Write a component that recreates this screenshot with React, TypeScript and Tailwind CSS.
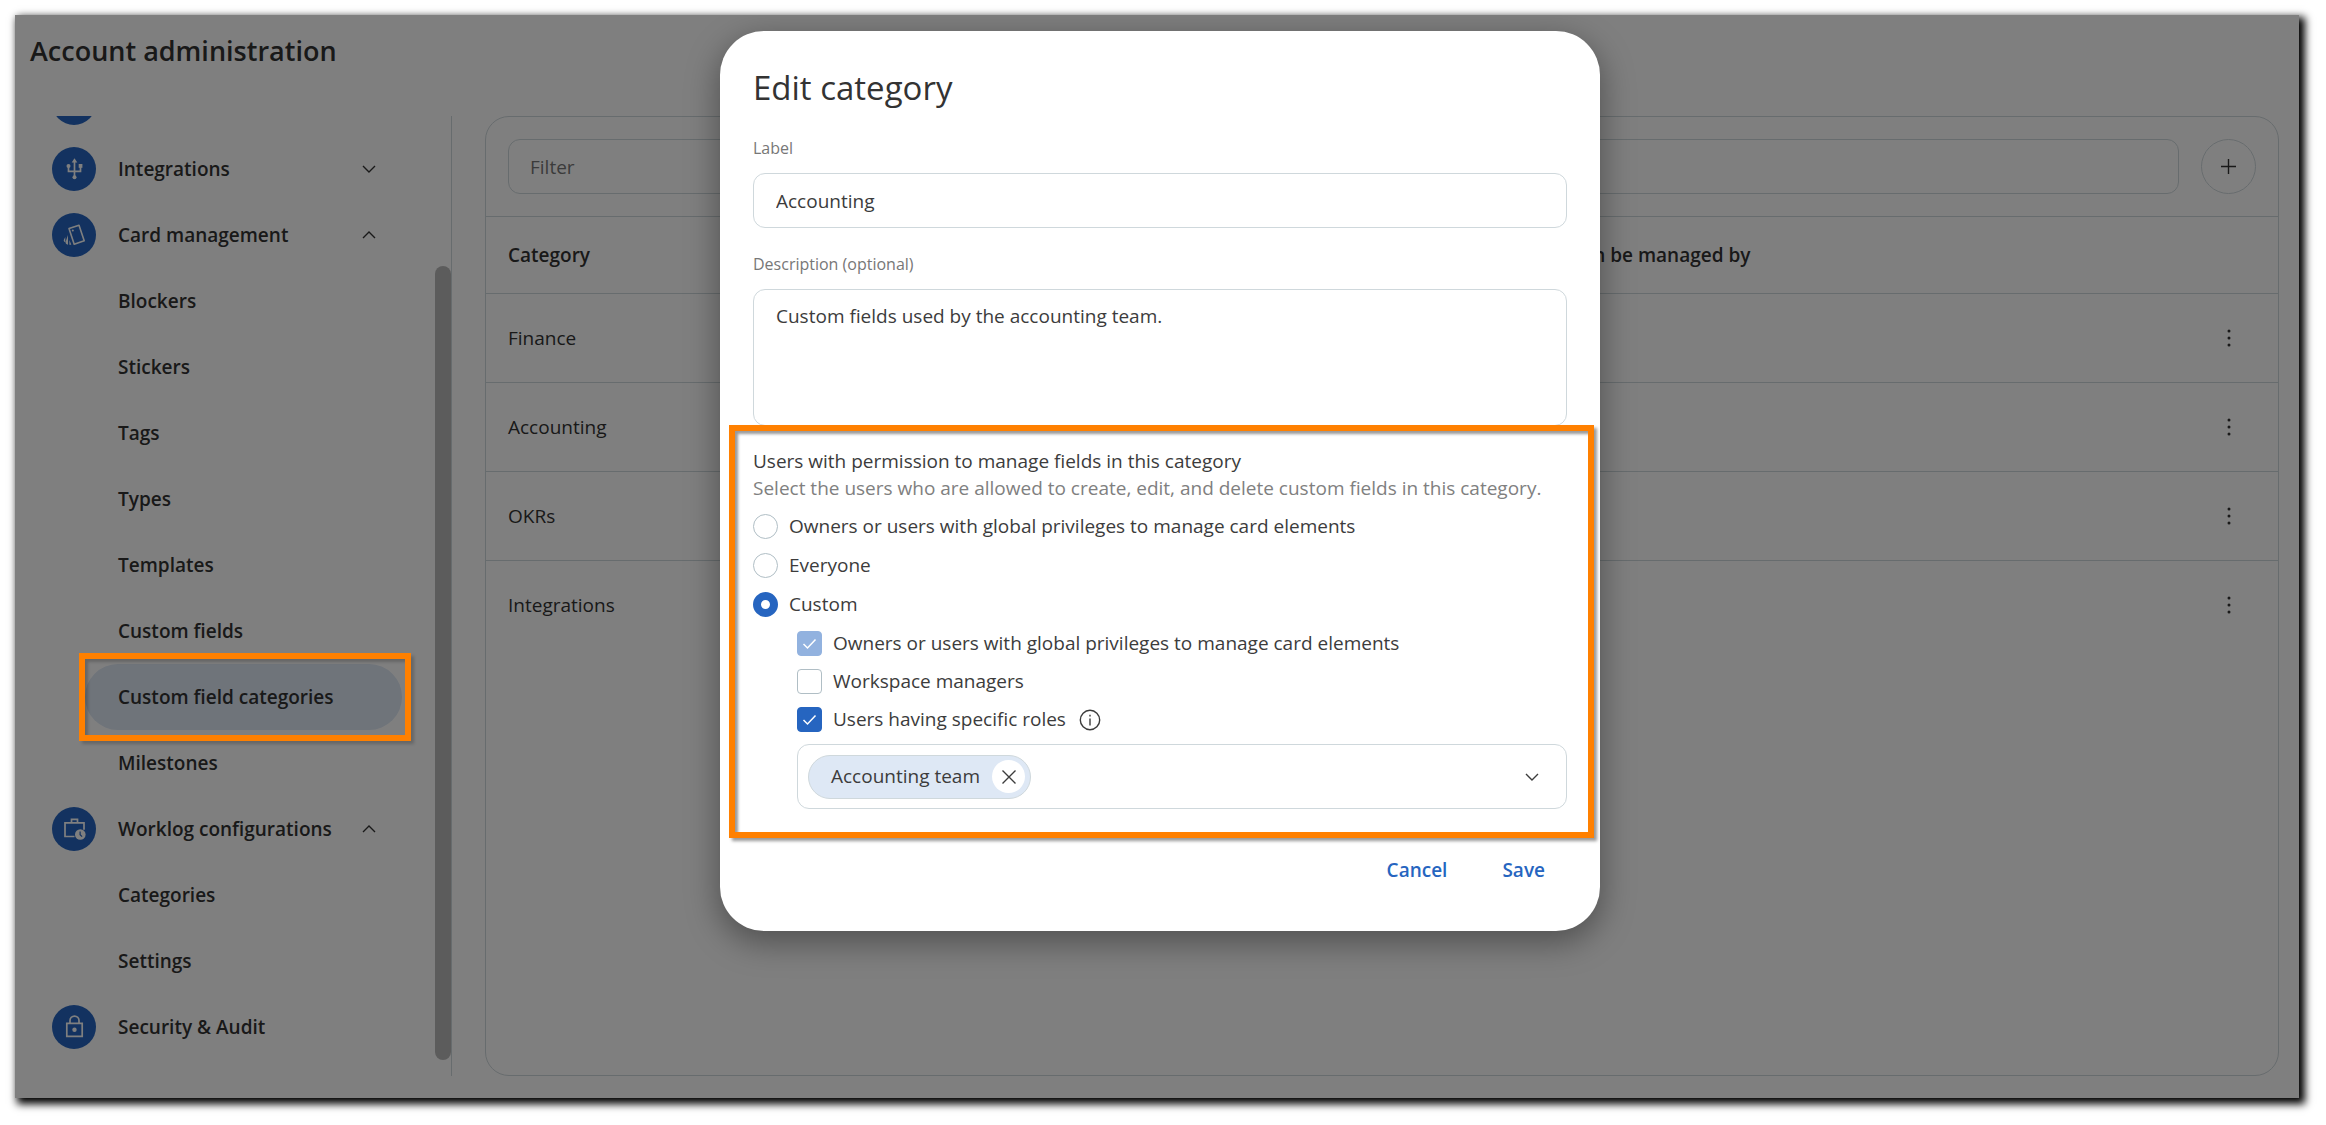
import { useId, type ReactNode } from "react";

const blue = "#2665c0";

function Chevron({ up = false }: { up?: boolean }) {
  return (
    <svg width="14" height="10" viewBox="0 0 14 10" fill="none" stroke="currentColor" strokeWidth="1.4" className="shrink-0" aria-hidden="true">
      <path d={up ? "M1 8 7 2l6 6" : "M1 2l6 6 6-6"} />
    </svg>
  );
}

function UsbIcon() {
  return (
    <svg width="24" height="24" viewBox="0 0 24 24" fill="none" stroke="#fff" strokeWidth="1.7" aria-hidden="true">
      <path d="M12.5 20V4M6.5 10v4.3h12V10" />
      <path d="M12.5 1.2l2.8 4.2H9.700z" fill="#fff" stroke="none" />
      <circle cx="12.500" cy="20.300" r="2" fill="#fff" stroke="none" />
      <circle cx="6.500" cy="9" r="2" fill="#fff" stroke="none" />
      <path d="M16.700 7h3.700v3.800h-3.700z" fill="#fff" stroke="none" />
    </svg>
  );
}

function CardsIcon() {
  return (
    <svg width="24" height="24" viewBox="0 0 24 24" fill="none" stroke="#fff" strokeWidth="1.6" strokeLinejoin="round" aria-hidden="true">
      <path d="M7 5.600 17 2.200l5.200 15.600-10 3.500z" />
      <circle cx="10.800" cy="7.400" r="1" fill="#fff" stroke="none" />
      <path d="M6 12v9.800c-1.800-.4-2.600-1.300-2.400-3zM3.300 14v5.200c-1.500-.5-1.900-1.300-1.300-2.600zM7.400 17l1.900 4.800H7.400z" fill="#fff" stroke="none" />
    </svg>
  );
}

function WorklogIcon() {
  return (
    <svg width="24" height="24" viewBox="0 0 24 24" fill="none" stroke="#fff" strokeWidth="1.700" aria-hidden="true">
      <path d="M12.500 19.500H3V5.800h19v7M9.500 5.800V2.300h6v3.500" />
      <circle cx="18.300" cy="17.500" r="5.300" fill="#fff" stroke="none" />
      <path d="M18.100 14.500v3.200l2 2" stroke={blue} strokeWidth="1.200" />
    </svg>
  );
}

function LockIcon() {
  return (
    <svg width="24" height="24" viewBox="0 0 24 24" fill="none" stroke="#fff" strokeWidth="1.700" aria-hidden="true">
      <path d="M4.800 8.300h15.400v13H4.800zM8 8.300V5.600a4.500 4.500 0 0 1 9 0v2.700" />
      <circle cx="12.500" cy="14.800" r="2.200" fill="#fff" stroke="none" />
    </svg>
  );
}

function NavGroup({ label, icon, state }: { label: string; icon: ReactNode; state?: "open" | "closed" }) {
  return (
    <li>
      <button type="button" className="flex h-[66px] w-full items-center text-left">
        <span className="mr-[22px] flex size-11 shrink-0 items-center justify-center rounded-full bg-[#2665c0]">{icon}</span>
        <span className="flex-1">{label}</span>
        {state && <Chevron up={state === "open"} />}
      </button>
    </li>
  );
}

function NavItem({ label, active = false }: { label: string; active?: boolean }) {
  return (
    <li className={active ? "relative pl-[33px]" : "pl-[33px]"}>
      <a
        href="#"
        aria-current={active ? "page" : undefined}
        className={
          active
            ? "-mr-[26px] flex h-[66px] items-center rounded-full bg-[#dee8f5] pl-[33px]"
            : "flex h-[66px] items-center rounded-full pl-[33px]"
        }
      >
        {label}
      </a>
      {active && (
        <span className="pointer-events-none absolute -top-[11px] -right-[35px] -bottom-[11px] left-[27px] z-20 border-6 border-[#ff8000] shadow-[3px_3px_3px_rgba(0,0,0,0.2),inset_3px_3px_3px_rgba(0,0,0,0.2)]" />
      )}
    </li>
  );
}

function Sidebar() {
  return (
    <nav aria-label="Account administration" className="flex w-[400px] shrink-0 overflow-hidden border-r border-[#cfd8dc] font-semibold">
      <ul className="-mt-[46px] w-[324px] shrink-0">
        <li className="flex h-[66px] items-center">
          <span className="size-11 rounded-full bg-[#2665c0]" />
        </li>
        <NavGroup label="Integrations" icon={<UsbIcon />} state="closed" />
        <NavGroup label="Card management" icon={<CardsIcon />} state="open" />
        <NavItem label="Blockers" />
        <NavItem label="Stickers" />
        <NavItem label="Tags" />
        <NavItem label="Types" />
        <NavItem label="Templates" />
        <NavItem label="Custom fields" />
        <NavItem label="Custom field categories" active />
        <NavItem label="Milestones" />
        <NavGroup label="Worklog configurations" icon={<WorklogIcon />} state="open" />
        <NavItem label="Categories" />
        <NavItem label="Settings" />
        <NavGroup label="Security & Audit" icon={<LockIcon />} />
      </ul>
      <div className="mt-[150px] mb-4 ml-auto w-4 rounded-full bg-[#b9b9b9]" />
    </nav>
  );
}

const categories = ["Finance", "Accounting", "OKRs", "Integrations"];

function CategoryPanel() {
  return (
    <section className="flex-1 overflow-hidden rounded-3xl border border-[#cfd8dc]">
      <div className="flex items-center gap-[22px] px-[22px] py-[22px]">
        <input
          type="text"
          aria-label="Filter"
          placeholder="Filter"
          className="h-[55px] min-w-0 flex-1 rounded-xl border border-[#cfd8dc] px-[21px] placeholder:text-[#777]"
        />
        <button type="button" aria-label="Add category" className="flex size-[55px] items-center justify-center rounded-full border border-[#cfd8dc]">
          <svg width="15" height="15" viewBox="0 0 15 15" stroke="#333" strokeWidth="1.400" aria-hidden="true">
            <path d="M7.500 0v15M0 7.500h15" />
          </svg>
        </button>
      </div>
      <table className="w-full table-fixed border-separate border-spacing-0 text-left">
        <thead>
          <tr className="h-[77px]">
            <th scope="col" className="w-3/5 border-t border-[#cfd8dc] pl-[22px] font-semibold">Category</th>
            <th scope="col" className="border-t border-[#cfd8dc] pl-[9px] font-semibold">Can be managed by</th>
            <th scope="col" className="w-[100px] border-t border-[#cfd8dc]" aria-label="Actions" />
          </tr>
        </thead>
        <tbody>
          {categories.map((name) => (
            <tr key={name} className="h-[89px]">
              <td className="border-t border-[#cfd8dc] pl-[22px]">{name}</td>
              <td className="border-t border-[#cfd8dc]" />
              <td className="border-t border-[#cfd8dc]">
                <button type="button" aria-label={`${name} actions`} className="mr-[22px] ml-auto flex size-[55px] items-center justify-center">
                  <svg width="4" height="18" viewBox="0 0 4 18" fill="#333" aria-hidden="true">
                    <circle cx="2" cy="2" r="1.500" />
                    <circle cx="2" cy="9" r="1.500" />
                    <circle cx="2" cy="16" r="1.500" />
                  </svg>
                </button>
              </td>
            </tr>
          ))}
        </tbody>
      </table>
    </section>
  );
}

function Radio({ label, checked = false }: { label: string; checked?: boolean }) {
  return (
    <label className="flex items-center gap-[11px]">
      <input
        type="radio"
        name="permission"
        defaultChecked={checked}
        className="size-[25px] shrink-0 appearance-none rounded-full border border-[#b0bec5] bg-white checked:border-8 checked:border-[#2665c0]"
      />
      {label}
    </label>
  );
}

function Checkbox({ label, checked = false, disabled = false }: { label: string; checked?: boolean; disabled?: boolean }) {
  const id = useId();
  return (
    <div className="flex items-center gap-[11px]">
      <span className="relative flex size-[25px] shrink-0">
        <input
          id={id}
          type="checkbox"
          defaultChecked={checked}
          disabled={disabled}
          className="peer size-full appearance-none rounded border border-[#b0bec5] bg-white checked:border-[#2665c0] checked:bg-[#2665c0] disabled:border-[#92b2df] disabled:bg-[#92b2df]"
        />
        <svg
          viewBox="0 0 25 25"
          fill="none"
          stroke="#fff"
          strokeWidth="1.500"
          className="pointer-events-none absolute inset-0 hidden peer-checked:block"
          aria-hidden="true"
        >
          <path d="M6.500 13l4 4L18.500 8.500" />
        </svg>
      </span>
      <label htmlFor={id}>{label}</label>
    </div>
  );
}

function EditDialog() {
  return (
    <div
      role="dialog"
      aria-labelledby="dialog-title"
      className="flex w-[880px] flex-col rounded-[44px] bg-white p-[33px] text-[#3c3c3c] shadow-[0_10px_32px_2px_rgba(0,0,0,0.36)]"
    >
      <h2 id="dialog-title" className="text-[33px] leading-[48px] text-[#333]">Edit category</h2>
      <label htmlFor="category-label" className="mt-[22px] text-base leading-7 text-[#777]">Label</label>
      <input
        id="category-label"
        type="text"
        defaultValue="Accounting"
        className="mt-[11px] h-[55px] rounded-xl border border-[#cfd8dc] px-[22px]"
      />
      <label htmlFor="category-description" className="mt-[22px] text-base leading-7 text-[#777]">Description (optional)</label>
      <textarea
        id="category-description"
        defaultValue="Custom fields used by the accounting team."
        className="mt-[11px] h-[137px] resize-none rounded-xl border border-[#cfd8dc] px-[22px] py-[13px]"
      />

      <fieldset className="relative mt-[22px] flex flex-col pb-[29px]">
        <legend className="contents">Users with permission to manage fields in this category</legend>
        <p className="text-[#808080]">Select the users who are allowed to create, edit, and delete custom fields in this category.</p>
        <div className="mt-[11px] flex flex-col gap-3">
          <Radio label="Owners or users with global privileges to manage card elements" />
          <Radio label="Everyone" />
          <Radio label="Custom" checked />
          <div className="ml-11 flex flex-col gap-[11px]">
            <Checkbox label="Owners or users with global privileges to manage card elements" checked disabled />
            <Checkbox label="Workspace managers" />
            <div className="flex items-center gap-[13px]">
              <Checkbox label="Users having specific roles" checked />
              <button type="button" aria-label="About roles">
                <svg width="22" height="22" viewBox="0 0 22 22" fill="none" stroke="currentColor" strokeWidth="1.400" aria-hidden="true">
                  <circle cx="11" cy="11" r="9.700" />
                  <path d="M11 9.500v7M11 5.800v1.800" />
                </svg>
              </button>
            </div>
            <div className="flex h-[65px] items-center rounded-xl border border-[#cfd8dc] pl-[10px]">
              <span className="flex h-11 items-center gap-3 rounded-full border border-[#cfd8dc] bg-[#dee8f5] pr-[5px] pl-[22px]">
                Accounting team
                <button type="button" aria-label="Remove Accounting team" className="flex size-[33px] items-center justify-center rounded-full bg-white">
                  <svg width="14" height="14" viewBox="0 0 14 14" stroke="currentColor" strokeWidth="1.400" aria-hidden="true">
                    <path d="M.5.5l13 13M13.500.5l-13 13" />
                  </svg>
                </button>
              </span>
              <button type="button" aria-label="Show roles" className="mr-[7px] ml-auto flex size-[55px] items-center justify-center">
                <Chevron />
              </button>
            </div>
          </div>
        </div>
        <div className="pointer-events-none absolute -top-[23px] -right-[27px] bottom-0 -left-[24px] border-6 border-[#ff8000] shadow-[3px_3px_3px_rgba(0,0,0,0.4),inset_3px_3px_3px_rgba(0,0,0,0.4)]" />
      </fieldset>

      <div className="mt-[5px] flex justify-end gap-[11px] font-semibold text-[#2665c0]">
        <button type="button" className="h-[55px] px-[22px]">Cancel</button>
        <button type="button" className="h-[55px] px-[22px]">Save</button>
      </div>
    </div>
  );
}

export default function App() {
  return (
    <div className="flex min-h-screen bg-white pt-[15px] pr-[27px] pb-[27px] pl-[15px] font-['Open_Sans',sans-serif] text-[19px] leading-[27px] text-[#333]">
      <div className="relative flex flex-1 flex-col bg-white shadow-[4px_4px_8px_2px_rgba(0,0,0,1)]">
        <h1 className="pt-4 pl-[15px] text-[27px] leading-10 font-semibold">Account administration</h1>
        <div className="mt-[45px] mb-[22px] flex flex-1 gap-[33px] pr-5 pl-[37px]">
          <Sidebar />
          <CategoryPanel />
        </div>
        <div className="absolute inset-0 z-10 bg-black/50" />
        <div className="absolute inset-0 z-20 flex items-start justify-center overflow-hidden pt-4 pl-1.5">
          <EditDialog />
        </div>
      </div>
    </div>
  );
}
